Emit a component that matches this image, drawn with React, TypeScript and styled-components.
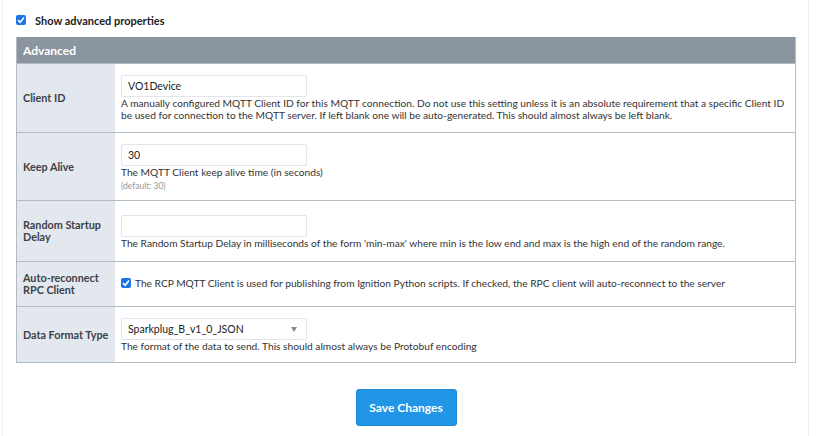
import React from 'react';
import styled, { createGlobalStyle } from 'styled-components';

const GlobalStyle = createGlobalStyle`
  html, body {
    margin: 0;
    padding: 0;
    background: #fff;
  }
  body {
    font-family: Lato, 'Liberation Sans', sans-serif;
    color: #333;
  }
`;

type Field = {
  label: string;
  kind: 'text' | 'check' | 'select';
  value?: string;
  desc: string;
  hint?: string;
  pad?: string;
};

const fields: Field[] = [
  {
    label: 'Client ID',
    kind: 'text',
    value: 'VO1Device',
    desc: 'A manually configured MQTT Client ID for this MQTT connection. Do not use this setting unless it is an absolute requirement that a specific Client ID be used for connection to the MQTT server. If left blank one will be auto-generated. This should almost always be left blank.',
  },
  {
    label: 'Keep Alive',
    kind: 'text',
    value: '30',
    desc: 'The MQTT Client keep alive time (in seconds)',
    hint: '(default: 30)',
    pad: '11px 6px 9px',
  },
  {
    label: 'Random Startup Delay',
    kind: 'text',
    value: '',
    desc: "The Random Startup Delay in milliseconds of the form 'min-max' where min is the low end and max is the high end of the random range.",
    pad: '14px 6px 12px',
  },
  {
    label: 'Auto-reconnect RPC Client',
    kind: 'check',
    desc: 'The RCP MQTT Client is used for publishing from Ignition Python scripts. If checked, the RPC client will auto-reconnect to the server',
    pad: '15px 6px 17px',
  },
  {
    label: 'Data Format Type',
    kind: 'select',
    value: 'Sparkplug_B_v1_0_JSON',
    desc: 'The format of the data to send. This should almost always be Protobuf encoding',
    pad: '11px 6px 10px',
  },
];

function CheckBox() {
  return (
    <Check>
      <svg width="8" height="8" viewBox="0 0 8 8">
        <path d="M1 4.2 L3.2 6.3 L7 1.6" fill="none" stroke="#fff" strokeWidth="1.6" />
      </svg>
    </Check>
  );
}

export default function App() {
  return (
    <>
      <GlobalStyle />
      <Page>
        <ToggleRow>
          <CheckBox />
          <ToggleLabel>Show advanced properties</ToggleLabel>
        </ToggleRow>
        <Table>
          <Header>Advanced</Header>
          {fields.map((f) => (
            <Row key={f.label}>
              <LabelCell>{f.label}</LabelCell>
              <ValueCell $pad={f.pad}>
                {f.kind === 'text' && <Input>{f.value}</Input>}
                {f.kind === 'select' && (
                  <Input>
                    {f.value}
                    <Caret />
                  </Input>
                )}
                {f.kind === 'check' ? (
                  <InlineCheck>
                    <CheckBox />
                    <Desc>{f.desc}</Desc>
                  </InlineCheck>
                ) : (
                  <Desc>{f.desc}</Desc>
                )}
                {f.hint && <Hint>{f.hint}</Hint>}
              </ValueCell>
            </Row>
          ))}
        </Table>
        <Actions>
          <SaveButton>Save Changes</SaveButton>
        </Actions>
      </Page>
    </>
  );
}

const Page = styled.div`
  margin-left: 2px;
  width: 807px;
  height: 436px;
  box-sizing: border-box;
  border-left: 1px solid #eceef2;
  border-right: 1px solid #eceef2;
  padding: 14px 12px 0 13px;
`;

const ToggleRow = styled.div`
  display: flex;
  align-items: center;
  gap: 9px;
  height: 12px;
  margin-bottom: 11px;
`;

const Check = styled.span`
  width: 10px;
  height: 10px;
  border-radius: 2px;
  background: #1a73e8;
  display: inline-flex;
  align-items: center;
  justify-content: center;
  flex: none;
`;

const ToggleLabel = styled.span`
  font-size: 11px;
  font-weight: 700;
  color: #222;
`;

const Table = styled.div`
  border: 1px solid #b3bac2;
  border-top: none;
  display: flex;
  flex-direction: column;
`;

const Header = styled.div`
  height: 26px;
  background: #8a959f;
  color: #fff;
  font-size: 12px;
  font-weight: 700;
  display: flex;
  align-items: center;
  padding-left: 6px;
`;

const Row = styled.div`
  display: grid;
  grid-template-columns: 98px 1fr;
  border-top: 1px solid #b3bac2;
`;

const LabelCell = styled.div`
  background: #e3e8ee;
  font-size: 10.8px;
  font-weight: 700;
  color: #3d4248;
  line-height: 12px;
  padding: 0 2px 0 6px;
  display: flex;
  align-items: center;
`;

const ValueCell = styled.div<{ $pad?: string }>`
  padding: ${(p) => p.$pad || '11px 6px 11px'};
  display: flex;
  flex-direction: column;
  justify-content: center;
`;

const Input = styled.div`
  width: 186px;
  height: 22px;
  box-sizing: border-box;
  border: 1px solid #e2e5e9;
  border-radius: 2px;
  background: #fff;
  font-size: 10.5px;
  color: #222;
  padding: 0 6px;
  display: flex;
  align-items: center;
  justify-content: space-between;
`;

const Caret = styled.span`
  width: 0;
  height: 0;
  border-left: 3.5px solid transparent;
  border-right: 3.5px solid transparent;
  border-top: 5px solid #888;
  margin-right: 3px;
`;

const InlineCheck = styled.div`
  display: flex;
  align-items: center;
  gap: 4px;
`;

const Desc = styled.div`
  font-size: 10.2px;
  line-height: 12px;
  color: #333;
`;

const Hint = styled.div`
  font-size: 8.5px;
  line-height: 10px;
  color: #999;
  margin-top: 3px;
`;

const Actions = styled.div`
  display: flex;
  justify-content: center;
  padding-top: 26px;
`;

const SaveButton = styled.button`
  width: 101px;
  height: 37px;
  background: #2196e6;
  border: 1px solid #1e8ad6;
  border-radius: 3px;
  color: #fff;
  font-family: Lato, 'Liberation Sans', sans-serif;
  font-size: 12px;
  font-weight: 700;
  cursor: pointer;
`;
